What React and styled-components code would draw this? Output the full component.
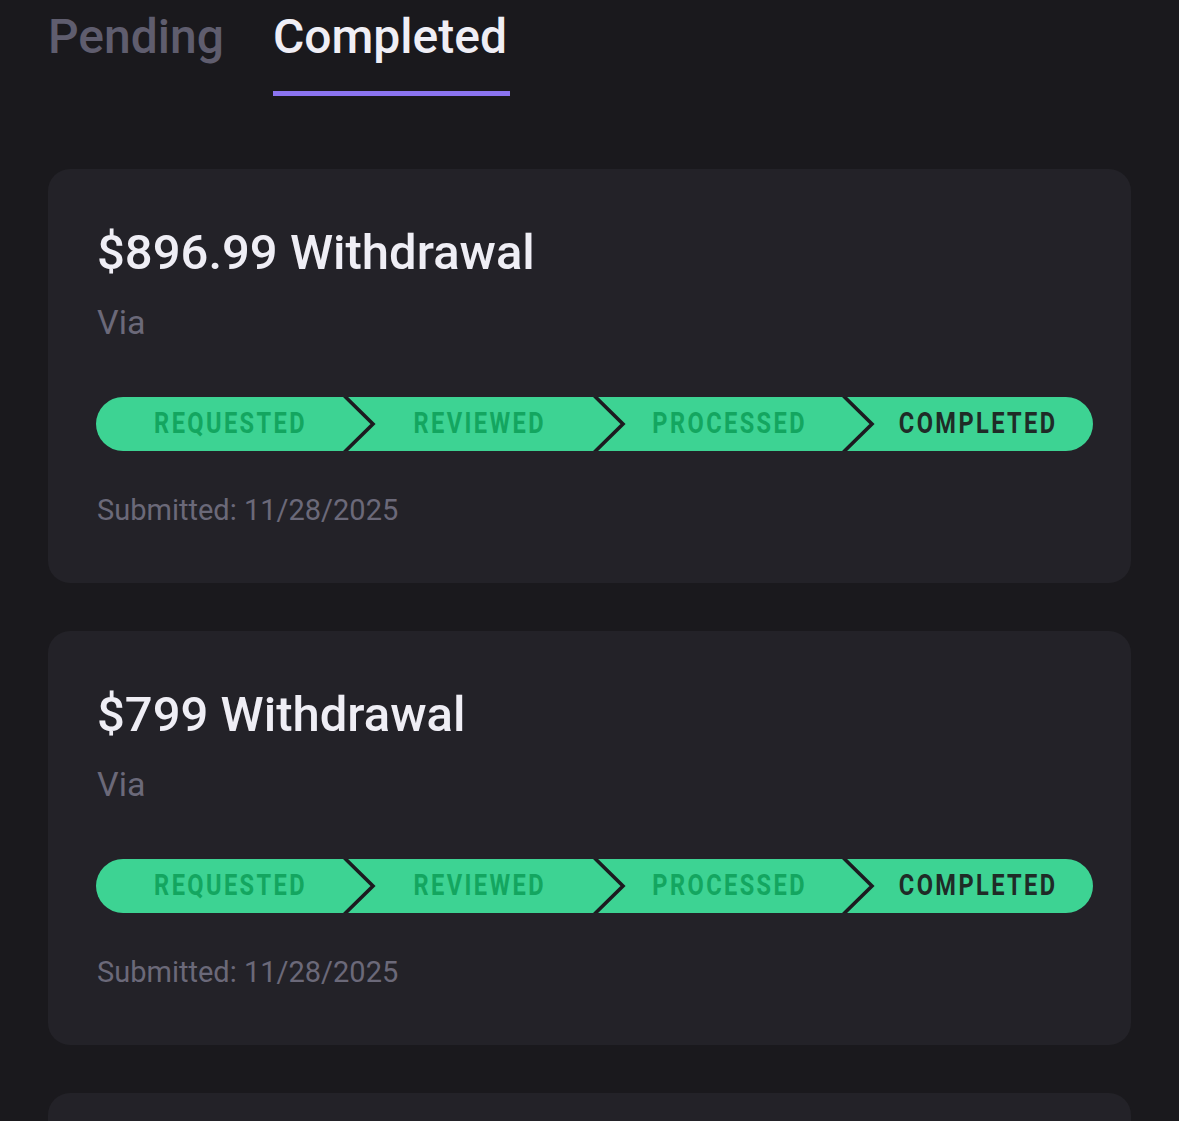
import React from "react";
import styled, { createGlobalStyle } from "styled-components";

const Global = createGlobalStyle`
  html, body { margin: 0; padding: 0; background: #1a191d; }
  body { font-family: Roboto, "Liberation Sans", sans-serif; -webkit-font-smoothing: antialiased; }
`;

const Page = styled.div`
  padding: 0 48px;
`;

const Tabs = styled.div`
  display: flex;
  gap: 49px;
`;

const Tab = styled.div`
  display: flex;
  flex-direction: column;
  align-items: stretch;
`;

const TabLabel = styled.span`
  font-size: 48px;
  font-weight: 500;
  line-height: 1;
  padding-top: 13px;
  color: ${(p) => (p.$active ? "#efeef5" : "#5f5d6e")};
`;

const TabBar = styled.div`
  height: 5px;
  margin-top: 30px;
  margin-right: -3px;
  background: ${(p) => (p.$active ? "#8b74f0" : "transparent")};
`;

const List = styled.div`
  display: flex;
  flex-direction: column;
  gap: 48px;
  margin-top: 73px;
`;

const Card = styled.div`
  background: #232228;
  border-radius: 22px;
  padding: 59px 38px 58px 48px;
  min-height: ${(p) => (p.$placeholder ? "28px" : "auto")};
`;

const Title = styled.div`
  font-size: 49px;
  font-weight: 500;
  line-height: 1;
  padding-left: 1px;
  color: #efeef5;
`;

const Via = styled.div`
  margin-top: 28px;
  font-size: 34px;
  line-height: 1;
  padding-left: 1px;
  color: #6b6979;
`;

const Stepper = styled.div`
  margin-top: 58px;
  height: 54px;
  border-radius: 27px;
  background: #3dd393;
  display: flex;
  overflow: hidden;
`;

const Step = styled.div`
  flex: 1;
  position: relative;
  display: flex;
  align-items: center;
  justify-content: center;
  padding-left: 20px;
`;

const StepLabel = styled.span`
  display: inline-block;
  font-family: Roboto, "Liberation Sans", sans-serif;
  font-weight: 700;
  font-size: 29.5px;
  line-height: 1;
  letter-spacing: 3px;
  transform: scaleX(0.8);
  color: ${(p) => (p.$current ? "#1f2b27" : "#13a660")};
`;

const Chevron = styled.svg`
  position: absolute;
  left: -2px;
  top: 0;
  width: 34px;
  height: 54px;
`;

const Submitted = styled.div`
  margin-top: 45px;
  font-size: 29px;
  line-height: 1;
  padding-left: 1px;
  color: #6b6979;
`;

const steps = ["REQUESTED", "REVIEWED", "PROCESSED", "COMPLETED"];

function Progress() {
  return (
    <Stepper>
      {steps.map((s, i) => (
        <Step key={s}>
          {i > 0 && (
            <Chevron viewBox="0 0 34 54" aria-hidden="true">
              <polyline points="1.5,-1 30,27 1.5,55" fill="none" stroke="#1c1b20" strokeWidth="3.6" strokeLinejoin="miter" />
            </Chevron>
          )}
          <StepLabel $current={i === steps.length - 1}>{s}</StepLabel>
        </Step>
      ))}
    </Stepper>
  );
}

const items = [
  { amount: "$896.99", date: "11/28/2025" },
  { amount: "$799", date: "11/28/2025" },
];

export default function App() {
  return (
    <Page>
      <Global />
      <Tabs>
        <Tab>
          <TabLabel>Pending</TabLabel>
          <TabBar />
        </Tab>
        <Tab>
          <TabLabel $active>Completed</TabLabel>
          <TabBar $active />
        </Tab>
      </Tabs>
      <List>
        {items.map((it, i) => (
          <Card key={i}>
            <Title>{it.amount} Withdrawal</Title>
            <Via>Via</Via>
            <Progress />
            <Submitted>Submitted: {it.date}</Submitted>
          </Card>
        ))}
        <Card $placeholder aria-hidden="true" />
      </List>
    </Page>
  );
}
